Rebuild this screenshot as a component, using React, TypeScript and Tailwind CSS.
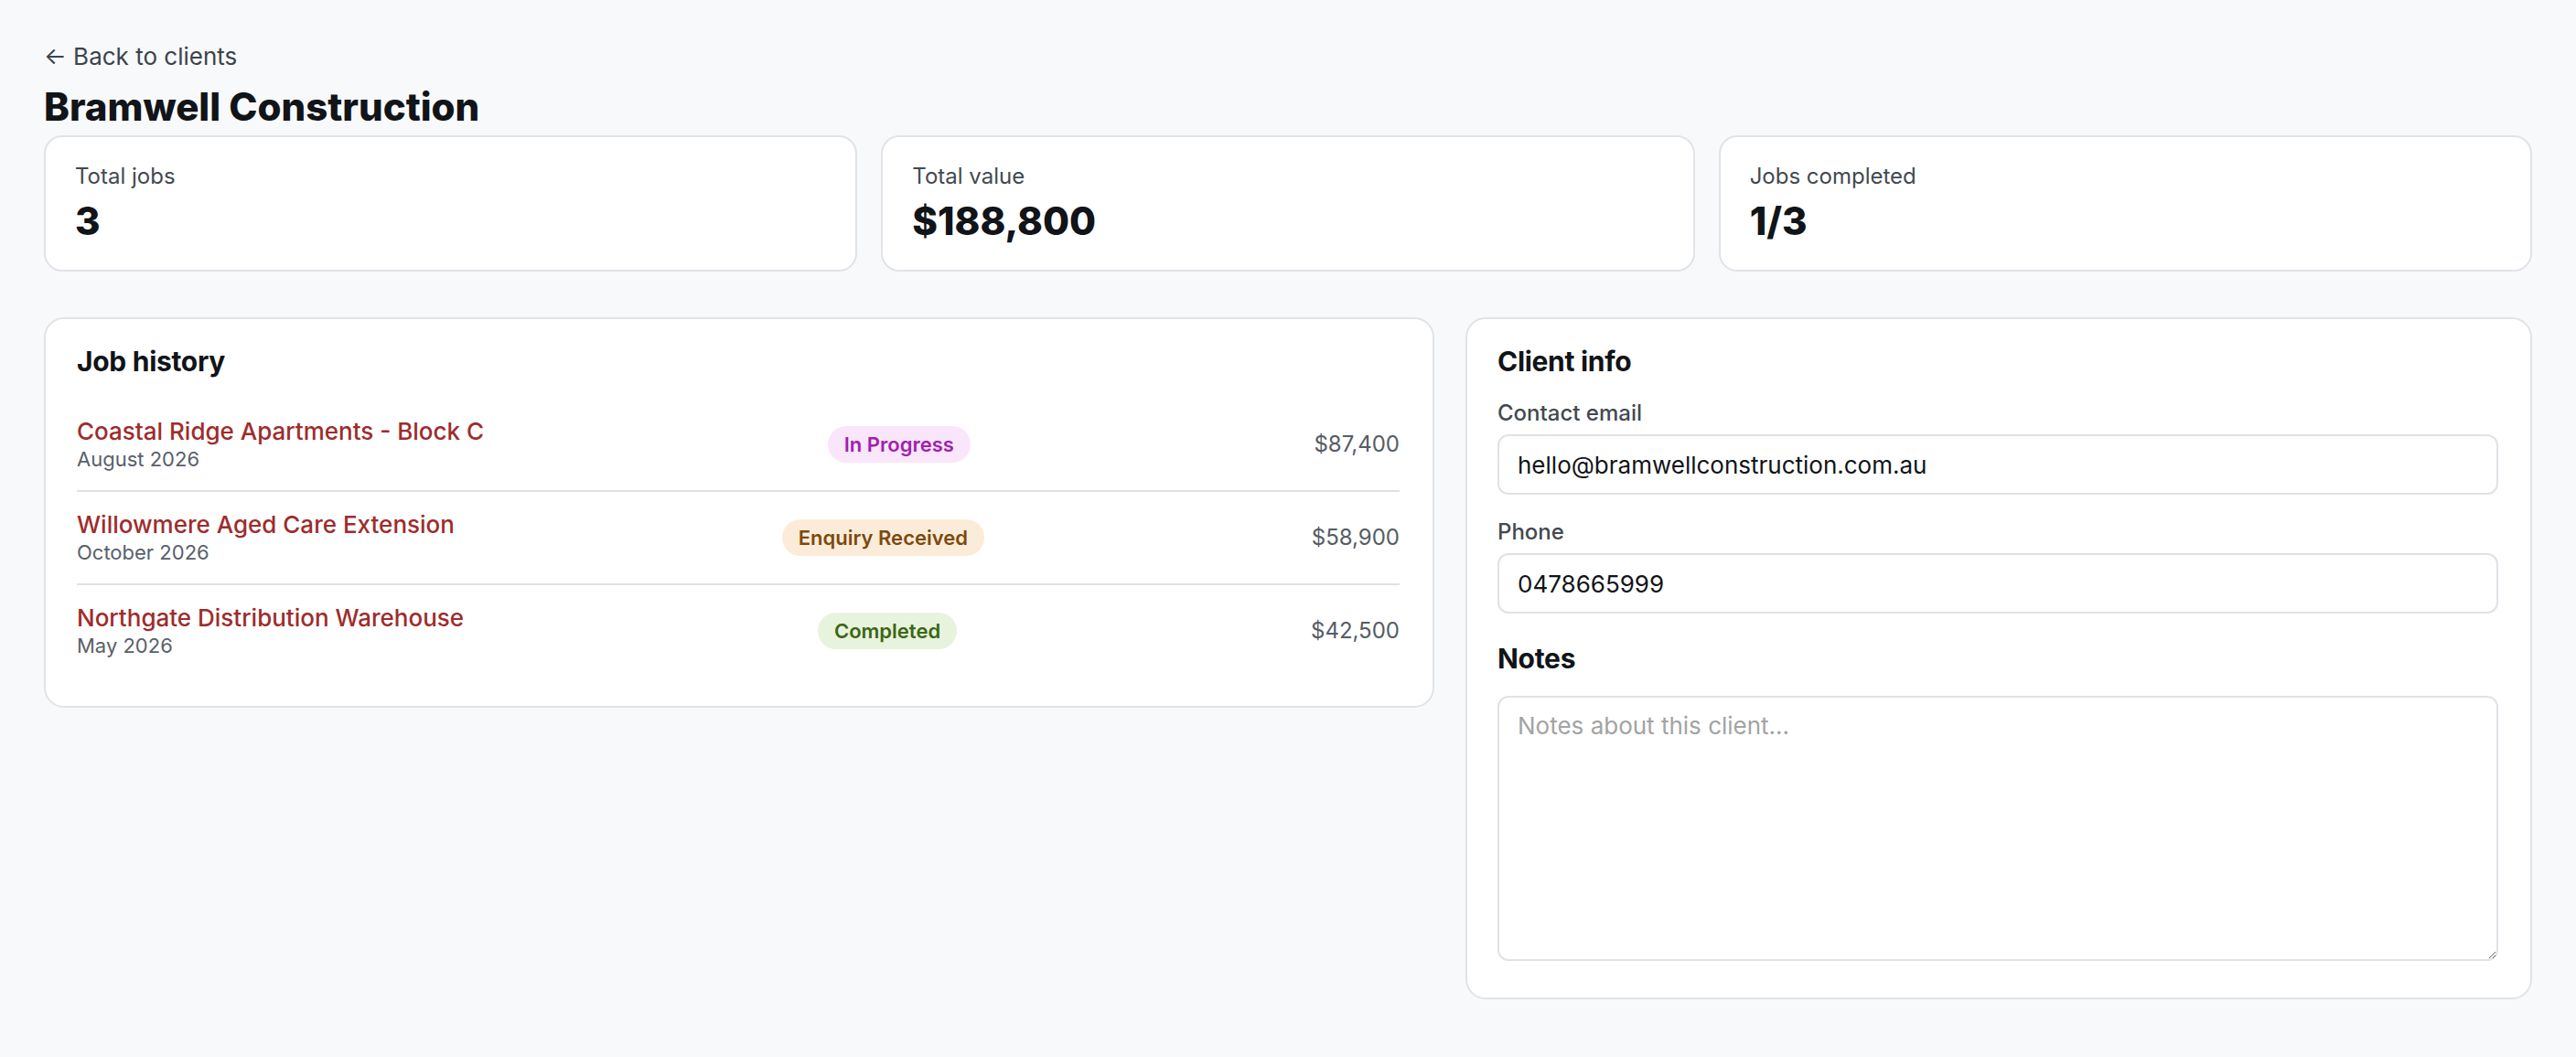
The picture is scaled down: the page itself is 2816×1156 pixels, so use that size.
import React from "react";

type Job = {
  name: string;
  date: string;
  status: "In Progress" | "Enquiry Received" | "Completed";
  amount: string;
};

const jobs: Job[] = [
  { name: "Coastal Ridge Apartments - Block C", date: "August 2026", status: "In Progress", amount: "$87,400" },
  { name: "Willowmere Aged Care Extension", date: "October 2026", status: "Enquiry Received", amount: "$58,900" },
  { name: "Northgate Distribution Warehouse", date: "May 2026", status: "Completed", amount: "$42,500" },
];

const statusStyles: Record<Job["status"], string> = {
  "In Progress": "bg-[#fae6fa] text-[#a11fae]",
  "Enquiry Received": "bg-[#fbecd9] text-[#7c4a0e]",
  Completed: "bg-[#e8f3dd] text-[#3b6714]",
};

const StatCard = ({ label, value }: { label: string; value: string }) => (
  <div className="rounded-[20px] border-2 border-[#e0e3e7] bg-white px-[32px] pt-[27px] pb-[29px]">
    <div className="text-[24px] leading-[32px] text-[#434950]">{label}</div>
    <div className="mt-[9px] text-[42px] leading-[48px] font-extrabold text-[#111418]">{value}</div>
  </div>
);

export default function App() {
  return (
    <div className="min-h-screen bg-[#f8f9fb] px-[48px] pt-[44px] pb-[60px] font-['Inter',sans-serif]">
      {/* Header */}
      <a href="#" className="block text-[26px] leading-[36px] text-[#3d434b]">
        ← Back to clients
      </a>
      <h1 className="mt-[13px] text-[42px] leading-[48px] font-extrabold text-[#111418]">
        Bramwell Construction
      </h1>

      {/* Stats */}
      <div className="mt-[7px] grid grid-cols-3 gap-[26px]">
        <StatCard label="Total jobs" value="3" />
        <StatCard label="Total value" value="$188,800" />
        <StatCard label="Jobs completed" value="1/3" />
      </div>

      <div className="mt-[50px] grid grid-cols-[1fr_1166px] items-start gap-[34px]">
        {/* Job history */}
        <div className="rounded-[22px] border-2 border-[#e0e3e7] bg-white pl-[34px] pr-[36px] pt-[28px] pb-[32px]">
          <h2 className="mb-[23px] text-[30px] leading-[36px] font-bold tracking-[-0.01em] text-[#111418]">
            Job history
          </h2>
          <div className="divide-y-2 divide-[#dee2e6]">
            {jobs.map((job) => (
              <div key={job.name} className="flex items-center justify-between pt-[20px] pb-[20px]">
                <div>
                  <div className="text-[26px] leading-[32px] font-medium text-[#9e2c2c]">{job.name}</div>
                  <div className="text-[22px] leading-[28px] text-[#59606a]">{job.date}</div>
                </div>
                <span
                  className={`rounded-full px-[18px] text-[22px] leading-[40px] font-semibold ${statusStyles[job.status]}`}
                >
                  {job.status}
                </span>
                <div className="text-[24px] leading-[32px] text-[#555c65]">{job.amount}</div>
              </div>
            ))}
          </div>
        </div>

        {/* Client info */}
        <div className="rounded-[22px] border-2 border-[#e0e3e7] bg-white pl-[33px] pr-[35px] pt-[28px] pb-[40px]">
          <h2 className="text-[30px] leading-[36px] font-bold tracking-[-0.01em] text-[#111418]">Client info</h2>

          <label className="mt-[23px] block text-[24px] leading-[32px] font-medium text-[#434950]">
            Contact email
          </label>
          <input
            className="mt-[7px] block h-[66px] w-full rounded-[12px] border-2 border-[#dfe2e6] bg-white px-[20px] text-[26px] text-[#111418] outline-none"
            defaultValue="hello@bramwellconstruction.com.au"
          />

          <label className="mt-[25px] block text-[24px] leading-[32px] font-medium text-[#434950]">Phone</label>
          <input
            className="mt-[7px] block h-[66px] w-full rounded-[12px] border-2 border-[#dfe2e6] bg-white px-[20px] text-[26px] text-[#111418] outline-none"
            defaultValue="0478665999"
          />

          <h3 className="mt-[31px] text-[30px] leading-[36px] font-bold tracking-[-0.01em] text-[#111418]">Notes</h3>
          <textarea
            className="mt-[23px] block h-[290px] w-full rounded-[12px] border-2 border-[#dfe2e6] bg-white px-[20px] pt-[14px] text-[26px] leading-[34px] text-[#111418] outline-none placeholder:text-[#a3a3a3]"
            placeholder="Notes about this client..."
          />
        </div>
      </div>
    </div>
  );
}
